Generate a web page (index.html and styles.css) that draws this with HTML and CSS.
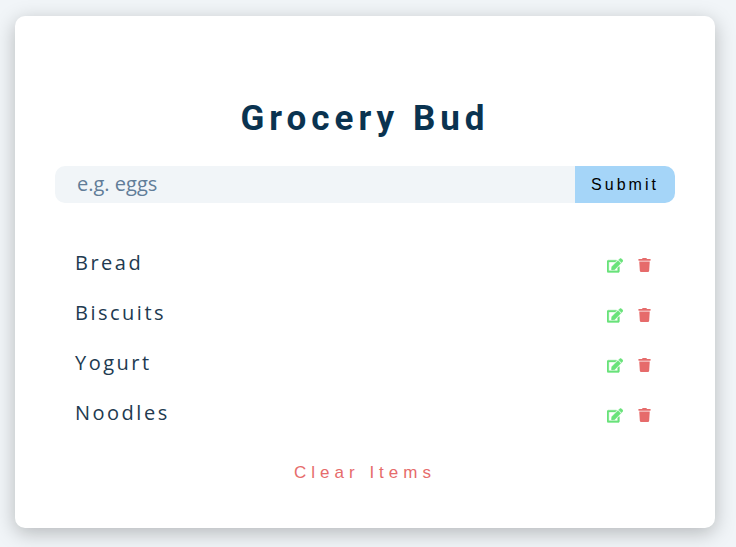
FILE: index.html
```html
<!DOCTYPE html>
<html lang="en">
<head>
<meta charset="utf-8">
<title>Grocery Bud</title>
<link rel="stylesheet" href="styles.css">
</head>
<body>
<svg class="sprite" aria-hidden="true">
  <symbol id="edit" viewBox="0 0 576 512"><path stroke="currentColor" stroke-width="14" d="M402.600 83.200l90.200 90.200c3.800 3.800 3.800 10 0 13.800L274.400 405.600l-92.800 10.300c-12.400 1.400-22.900-9.100-21.500-21.500l10.300-92.800L388.800 83.200c3.800-3.800 10-3.800 13.800 0zm162-22.900l-48.800-48.800c-15.200-15.200-39.900-15.200-55.200 0l-35.400 35.400c-3.800 3.800-3.800 10 0 13.800l90.200 90.200c3.800 3.800 10 3.800 13.800 0l35.400-35.400c15.200-15.300 15.200-40 0-55.200zM384 346.200V448H64V128h229.800c3.200 0 6.200-1.300 8.500-3.500l40-40c7.600-7.600 2.200-20.500-8.500-20.500H48C21.500 64 0 85.500 0 112v352c0 26.500 21.500 48 48 48h352c26.500 0 48-21.500 48-48V306.200c0-10.700-12.900-16-20.500-8.500l-40 40c-2.200 2.300-3.500 5.300-3.500 8.500z"/></symbol>
  <symbol id="trash" viewBox="0 0 448 512"><path d="M432 32H312l-9.400-18.700A24 24 0 0 0 281.100 0H166.800a23.700 23.700 0 0 0-21.400 13.300L136 32H16A16 16 0 0 0 0 48v32a16 16 0 0 0 16 16h416a16 16 0 0 0 16-16V48a16 16 0 0 0-16-16zM53.200 467a48 48 0 0 0 47.900 45h245.800a48 48 0 0 0 47.900-45L416 128H32z"/></symbol>
</svg>
<main class="card">
  <h1 class="title">Grocery Bud</h1>
  <form class="form">
    <input class="field" type="text" placeholder="e.g. eggs">
    <button class="submit" type="button">Submit</button>
  </form>
  <ul class="list">
    <li class="item"><span>Bread</span><div class="actions"><svg class="edit"><use href="#edit"/></svg><svg class="trash"><use href="#trash"/></svg></div></li>
    <li class="item"><span>Biscuits</span><div class="actions"><svg class="edit"><use href="#edit"/></svg><svg class="trash"><use href="#trash"/></svg></div></li>
    <li class="item"><span>Yogurt</span><div class="actions"><svg class="edit"><use href="#edit"/></svg><svg class="trash"><use href="#trash"/></svg></div></li>
    <li class="item"><span>Noodles</span><div class="actions"><svg class="edit"><use href="#edit"/></svg><svg class="trash"><use href="#trash"/></svg></div></li>
  </ul>
  <button class="clear" type="button">Clear Items</button>
</main>
</body>
</html>
```
FILE: styles.css
```css
* { box-sizing: border-box; margin: 0; padding: 0; }
body { background: #f1f5f8; height: 547px; overflow: hidden; padding: 16px 0 0 15px; font-family: "Open Sans", sans-serif; }
.sprite { display: none; }
.card { width: 700px; height: 512px; background: #fff; border-radius: 10px; box-shadow: 0 5px 20px rgba(0,0,0,.25); padding: 79px 40px 0; }
.title { font: 700 35px/48px Roboto, sans-serif; letter-spacing: 5px; color: #0a3350; text-align: center; }
.form { display: flex; height: 37px; margin-top: 23px; border-radius: 10px; overflow: hidden; }
.field { flex: 1; border: 0; background: #f1f5f8; padding: 0 0 2px 22px; font: 20px "Open Sans", sans-serif; }
.field::placeholder { color: #617d98; opacity: 1; }
.submit { width: 100px; border: 0; background: #a5d5f8; font: 16px "Liberation Sans", sans-serif; letter-spacing: 3px; color: #000; }
.list { list-style: none; margin-top: 34px; padding: 0 24px 0 20px; }
.item { display: flex; height: 50px; align-items: center; justify-content: space-between; font-size: 20px; letter-spacing: 2.5px; color: #213a50; }
.actions { display: flex; gap: 15px; padding-top: 6px; }
.edit { width: 16px; height: 15px; fill: #69e37a; color: #69e37a; overflow: visible; }
.trash { width: 13px; height: 14px; fill: #e66b6b; }
.clear { display: block; margin: 26px auto 0; border: 0; background: none; color: #e66b6b; font: 17px/20px "Liberation Sans", sans-serif; letter-spacing: 5px; }
```
